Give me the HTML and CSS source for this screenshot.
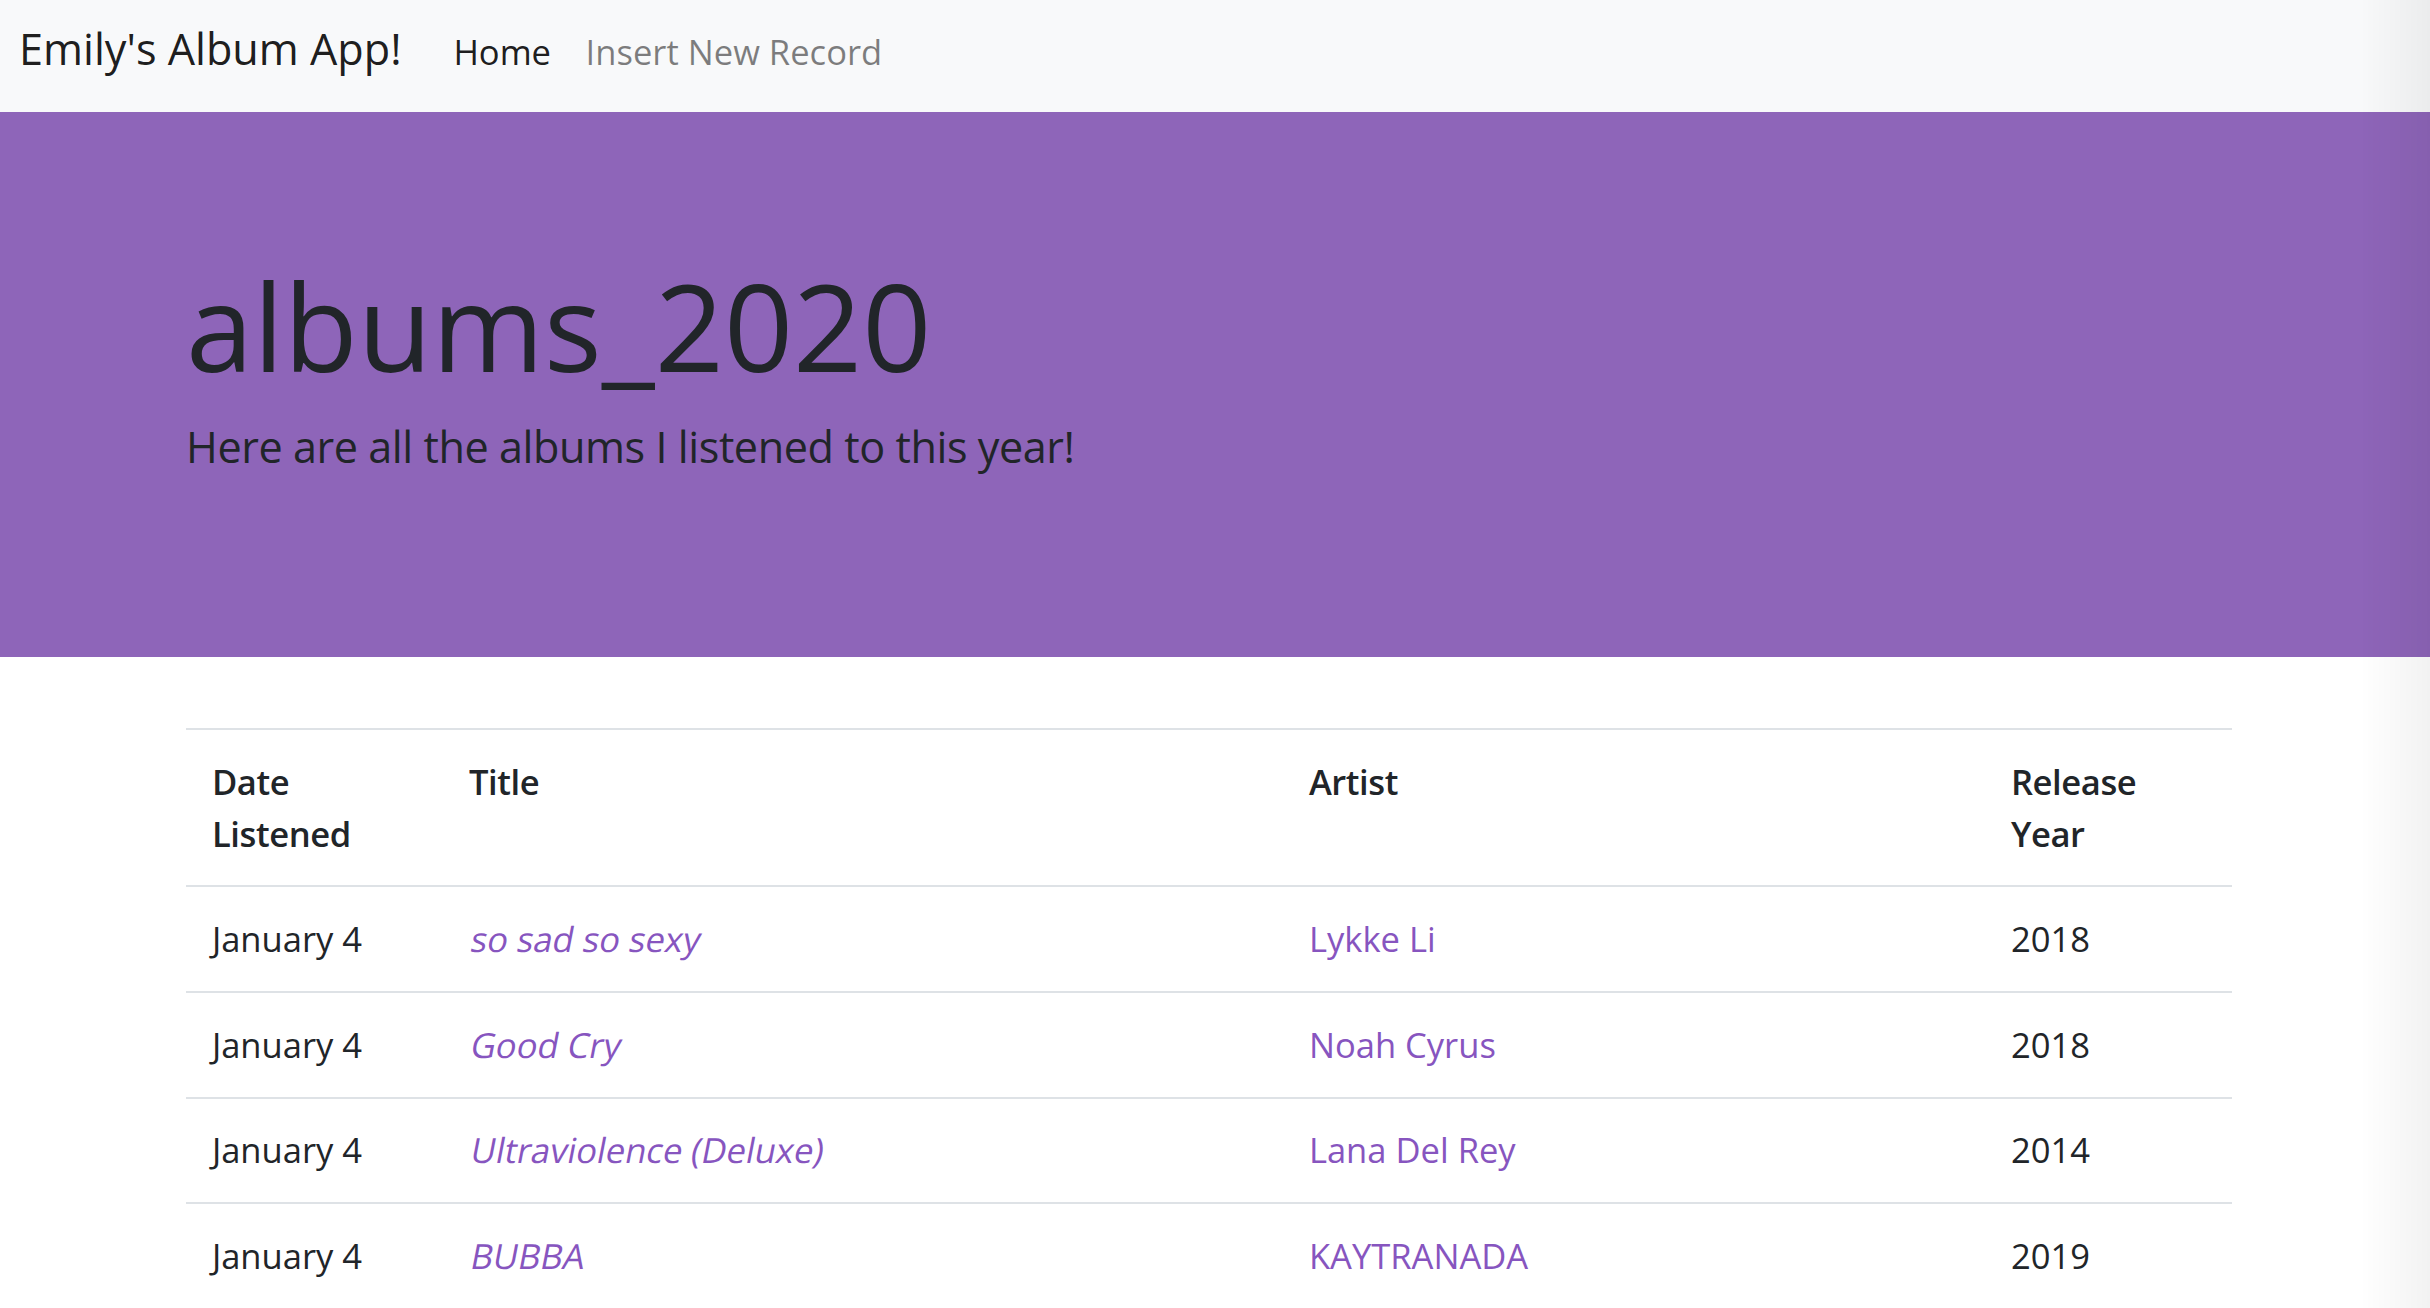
FILE: index.html
```html
<!DOCTYPE html>
<html lang="en">
<head>
<meta charset="utf-8">
<title>Emily's Album App!</title>
<link rel="stylesheet" href="styles.css">
</head>
<body>
<nav class="navbar">
  <a class="brand" href="#">Emily's Album App!</a>
  <ul class="nav">
    <li><a class="nav-link active" href="#">Home</a></li>
    <li><a class="nav-link" href="#">Insert New Record</a></li>
  </ul>
</nav>
<header class="jumbotron">
  <div class="container">
    <h1 class="display">albums_2020</h1>
    <p class="lead">Here are all the albums I listened to this year!</p>
  </div>
</header>
<main class="container">
  <table class="table">
    <colgroup>
      <col class="col-date">
      <col class="col-title">
      <col class="col-artist">
      <col class="col-year">
    </colgroup>
    <thead>
      <tr><th>Date Listened</th><th>Title</th><th>Artist</th><th>Release Year</th></tr>
    </thead>
    <tbody>
      <tr><td>January 4</td><td><a class="title-link" href="#">so sad so sexy</a></td><td><a href="#">Lykke Li</a></td><td>2018</td></tr>
      <tr><td>January 4</td><td><a class="title-link" href="#">Good Cry</a></td><td><a href="#">Noah Cyrus</a></td><td>2018</td></tr>
      <tr><td>January 4</td><td><a class="title-link" href="#">Ultraviolence (Deluxe)</a></td><td><a href="#">Lana Del Rey</a></td><td>2014</td></tr>
      <tr><td>January 4</td><td><a class="title-link" href="#">BUBBA</a></td><td><a href="#">KAYTRANADA</a></td><td>2019</td></tr>
    </tbody>
  </table>
</main>
<div class="edge-shade"></div>
</body>
</html>
```

FILE: styles.css
```css
* { box-sizing: border-box; }

html, body {
  margin: 0;
  padding: 0;
}

body {
  font-family: "Open Sans", "Noto Sans", sans-serif;
  font-size: 34.56px;
  line-height: 1.5;
  color: #212529;
  background: #ffffff;
  overflow: hidden;
}

a { text-decoration: none; }

.navbar {
  display: flex;
  align-items: baseline;
  height: 112px;
  padding: 16px 19px 0;
  background: #f8f9fa;
}

.brand {
  font-size: 43.2px;
  line-height: 65px;
  color: rgba(0, 0, 0, 0.9);
  margin-right: 34.5px;
  white-space: nowrap;
}

.nav {
  display: flex;
  list-style: none;
  margin: 0;
  padding: 0;
}

.nav-link {
  display: block;
  padding: 0 17.3px;
  color: rgba(0, 0, 0, 0.5);
}

.nav-link.active {
  color: rgba(0, 0, 0, 0.9);
}

.jumbotron {
  background: #8e65b9;
  padding: 141px 0 142px;
  margin-bottom: 71px;
}

.container {
  width: 2046px;
  margin-left: 186px;
}

.display {
  margin: 0 0 17.3px;
  font-size: 121px;
  font-weight: 400;
  line-height: 1.2;
  color: #212529;
}

.lead {
  margin: 0 0 34.6px;
  font-size: 43.2px;
  font-weight: 400;
  line-height: 1.5;
  letter-spacing: -0.45px;
  color: #212529;
}

.table {
  width: 100%;
  table-layout: fixed;
  border-collapse: collapse;
  border-top: 2px solid #dee2e6;
}

.col-date { width: 257px; }
.col-title { width: 840px; }
.col-artist { width: 702px; }
.col-year { width: 247px; }

.table th,
.table td {
  padding: 25.9px;
  text-align: left;
  vertical-align: top;
  border-bottom: 2px solid #dee2e6;
}

.table th {
  font-weight: 600;
  letter-spacing: -0.4px;
}

.table a {
  color: #8755bf;
}

.title-link {
  display: inline-block;
  transform: skewX(-11deg);
  transform-origin: 0 75%;
}

.edge-shade {
  position: fixed;
  top: 0;
  right: 0;
  width: 70px;
  height: 100%;
  pointer-events: none;
  background: linear-gradient(to right, rgba(0, 0, 0, 0), rgba(0, 0, 0, 0.05));
}
```
